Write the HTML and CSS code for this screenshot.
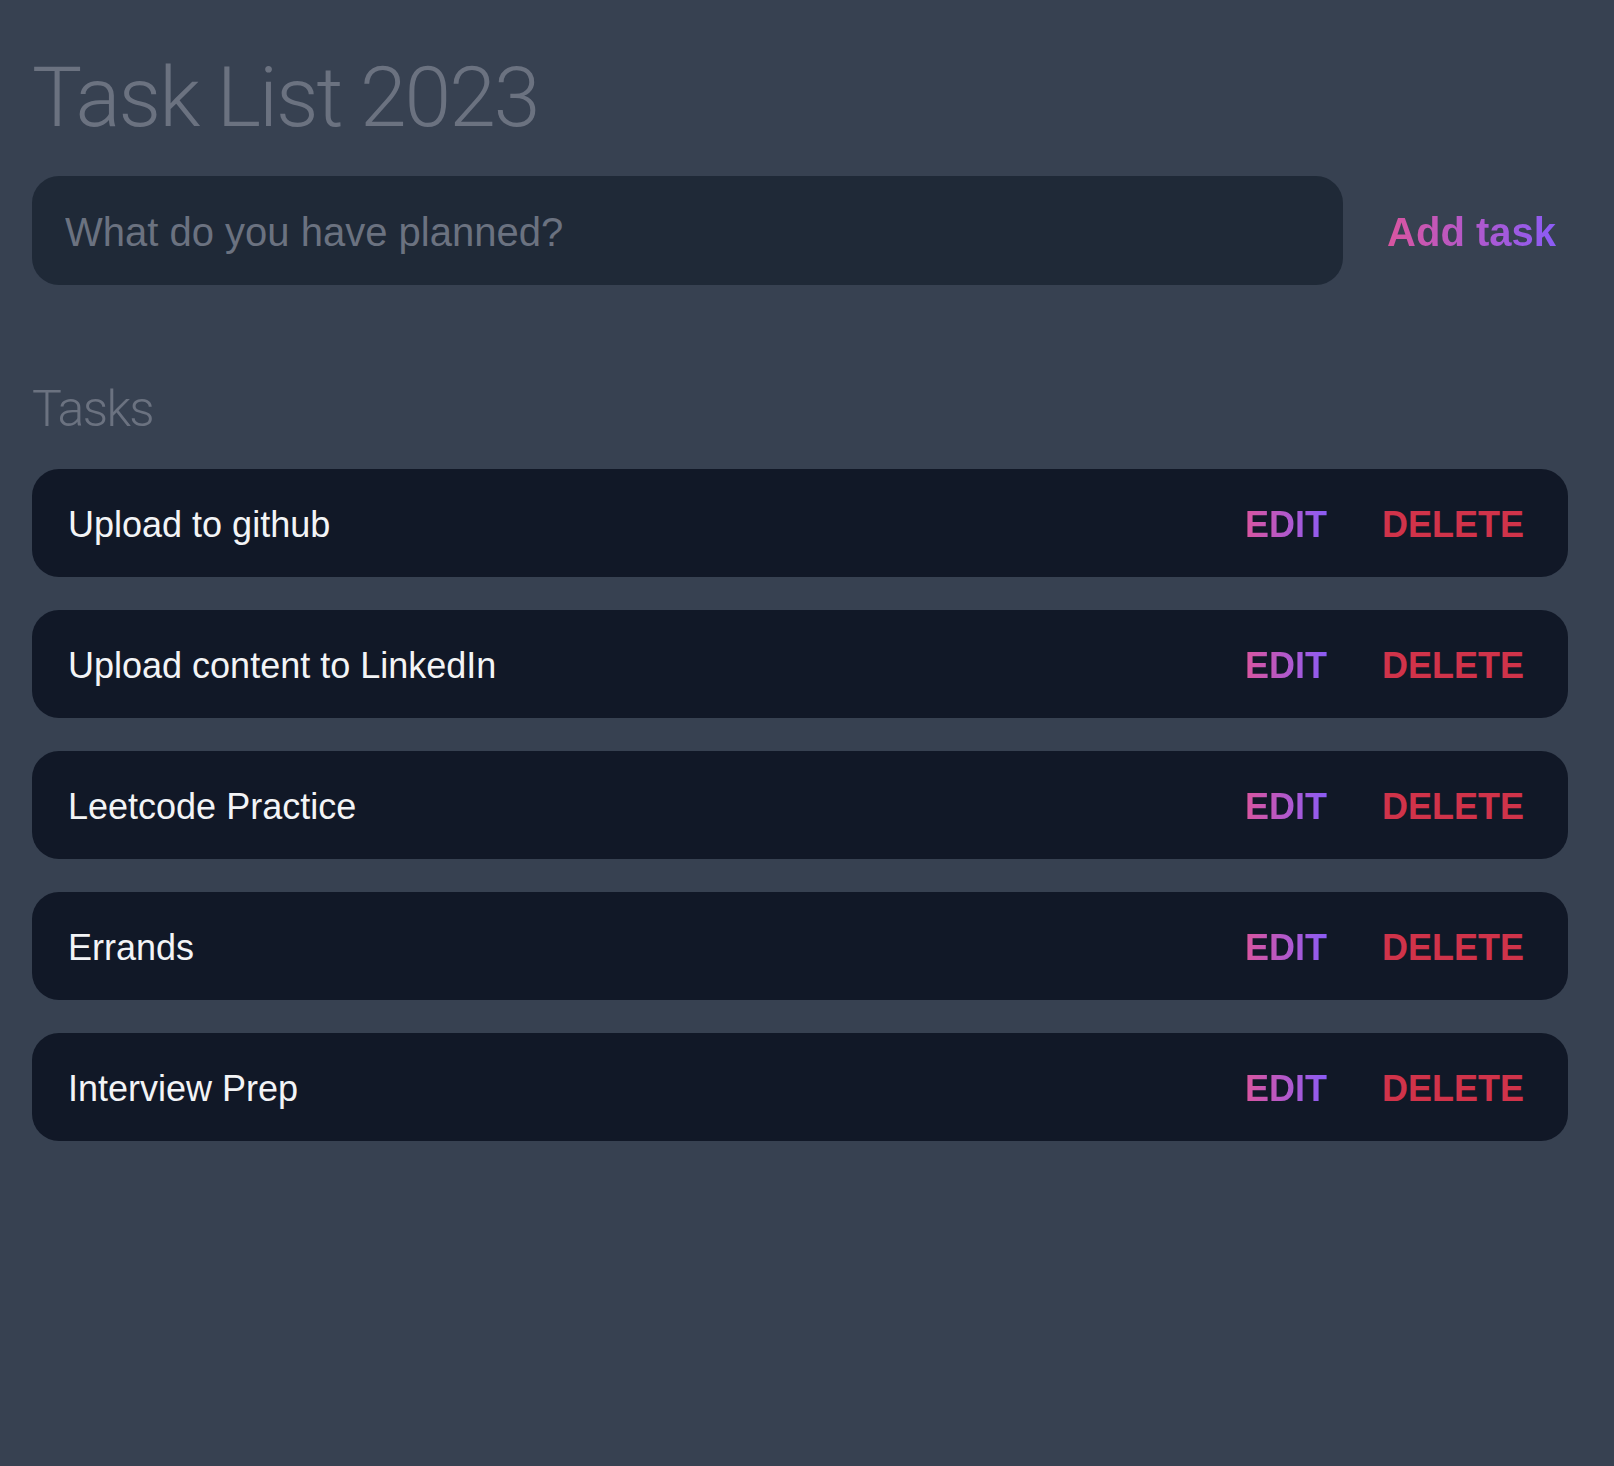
FILE: index.html
```html
<!DOCTYPE html>
<html lang="en">
<head>
<meta charset="utf-8">
<title>Task List 2023</title>
<link rel="stylesheet" href="styles.css">
</head>
<body>
<main class="app">
  <h1 class="title">Task List 2023</h1>
  <form class="new-task">
    <input class="new-task-input" type="text" placeholder="What do you have planned?">
    <button class="add-btn" type="button"><span class="gradient-text">Add task</span></button>
  </form>
  <section class="tasks">
    <h2 class="tasks-heading">Tasks</h2>
    <div class="task-list">
      <div class="task">
        <span class="task-text">Upload to github</span>
        <div class="actions"><button class="edit"><span class="gradient-text">EDIT</span></button><button class="delete">DELETE</button></div>
      </div>
      <div class="task">
        <span class="task-text">Upload content to LinkedIn</span>
        <div class="actions"><button class="edit"><span class="gradient-text">EDIT</span></button><button class="delete">DELETE</button></div>
      </div>
      <div class="task">
        <span class="task-text">Leetcode Practice</span>
        <div class="actions"><button class="edit"><span class="gradient-text">EDIT</span></button><button class="delete">DELETE</button></div>
      </div>
      <div class="task">
        <span class="task-text">Errands</span>
        <div class="actions"><button class="edit"><span class="gradient-text">EDIT</span></button><button class="delete">DELETE</button></div>
      </div>
      <div class="task">
        <span class="task-text">Interview Prep</span>
        <div class="actions"><button class="edit"><span class="gradient-text">EDIT</span></button><button class="delete">DELETE</button></div>
      </div>
    </div>
  </section>
</main>
</body>
</html>
```
FILE: styles.css
```css
html, body {
  margin: 0;
  padding: 0;
  background: #374151;
  min-height: 100%;
}
body {
  font-family: "Liberation Sans", Arial, sans-serif;
  color: #f3f4f6;
}
.app {
  padding: 0 46px 0 32px;
}
.title {
  margin: 56px 0 36px;
  font-family: Roboto, "Liberation Sans", sans-serif;
  font-weight: 300;
  font-size: 84px;
  line-height: 1;
  color: #6b7280;
  letter-spacing: -2px;
}
.new-task {
  display: flex;
  align-items: center;
  gap: 44px;
  margin: 0;
}
.new-task-input {
  flex: 1;
  height: 109px;
  box-sizing: border-box;
  border: none;
  outline: none;
  border-radius: 27px;
  background: #1f2937;
  padding: 4px 33px 0;
  font-family: "Liberation Sans", Arial, sans-serif;
  font-size: 40px;
  color: #f3f4f6;
}
.new-task-input::placeholder {
  color: #6b7280;
}
button {
  background: none;
  border: none;
  padding: 0;
  margin: 0;
  cursor: pointer;
  font-family: "Liberation Sans", Arial, sans-serif;
  font-weight: 700;
}
.add-btn {
  font-size: 40px;
  padding: 4px 12px 0 0;
}
.gradient-text {
  background: linear-gradient(90deg, #d9559f, #8b5cf6);
  -webkit-background-clip: text;
  background-clip: text;
  color: transparent;
}
.tasks-heading {
  margin: 99px 0 35px;
  font-family: Roboto, "Liberation Sans", sans-serif;
  font-weight: 300;
  font-size: 50px;
  line-height: 1;
  color: #6b7280;
  letter-spacing: -1.6px;
}
.task-list {
  display: flex;
  flex-direction: column;
  gap: 33px;
}
.task {
  display: flex;
  align-items: center;
  justify-content: space-between;
  height: 108px;
  box-sizing: border-box;
  padding: 4px 44px 0 36px;
  background: #111827;
  border-radius: 27px;
}
.task-text {
  font-size: 36px;
  color: #f3f4f6;
}
.actions {
  display: flex;
  gap: 55px;
}
.edit, .delete {
  font-size: 36px;
}
.delete {
  color: #d0334a;
}
```
